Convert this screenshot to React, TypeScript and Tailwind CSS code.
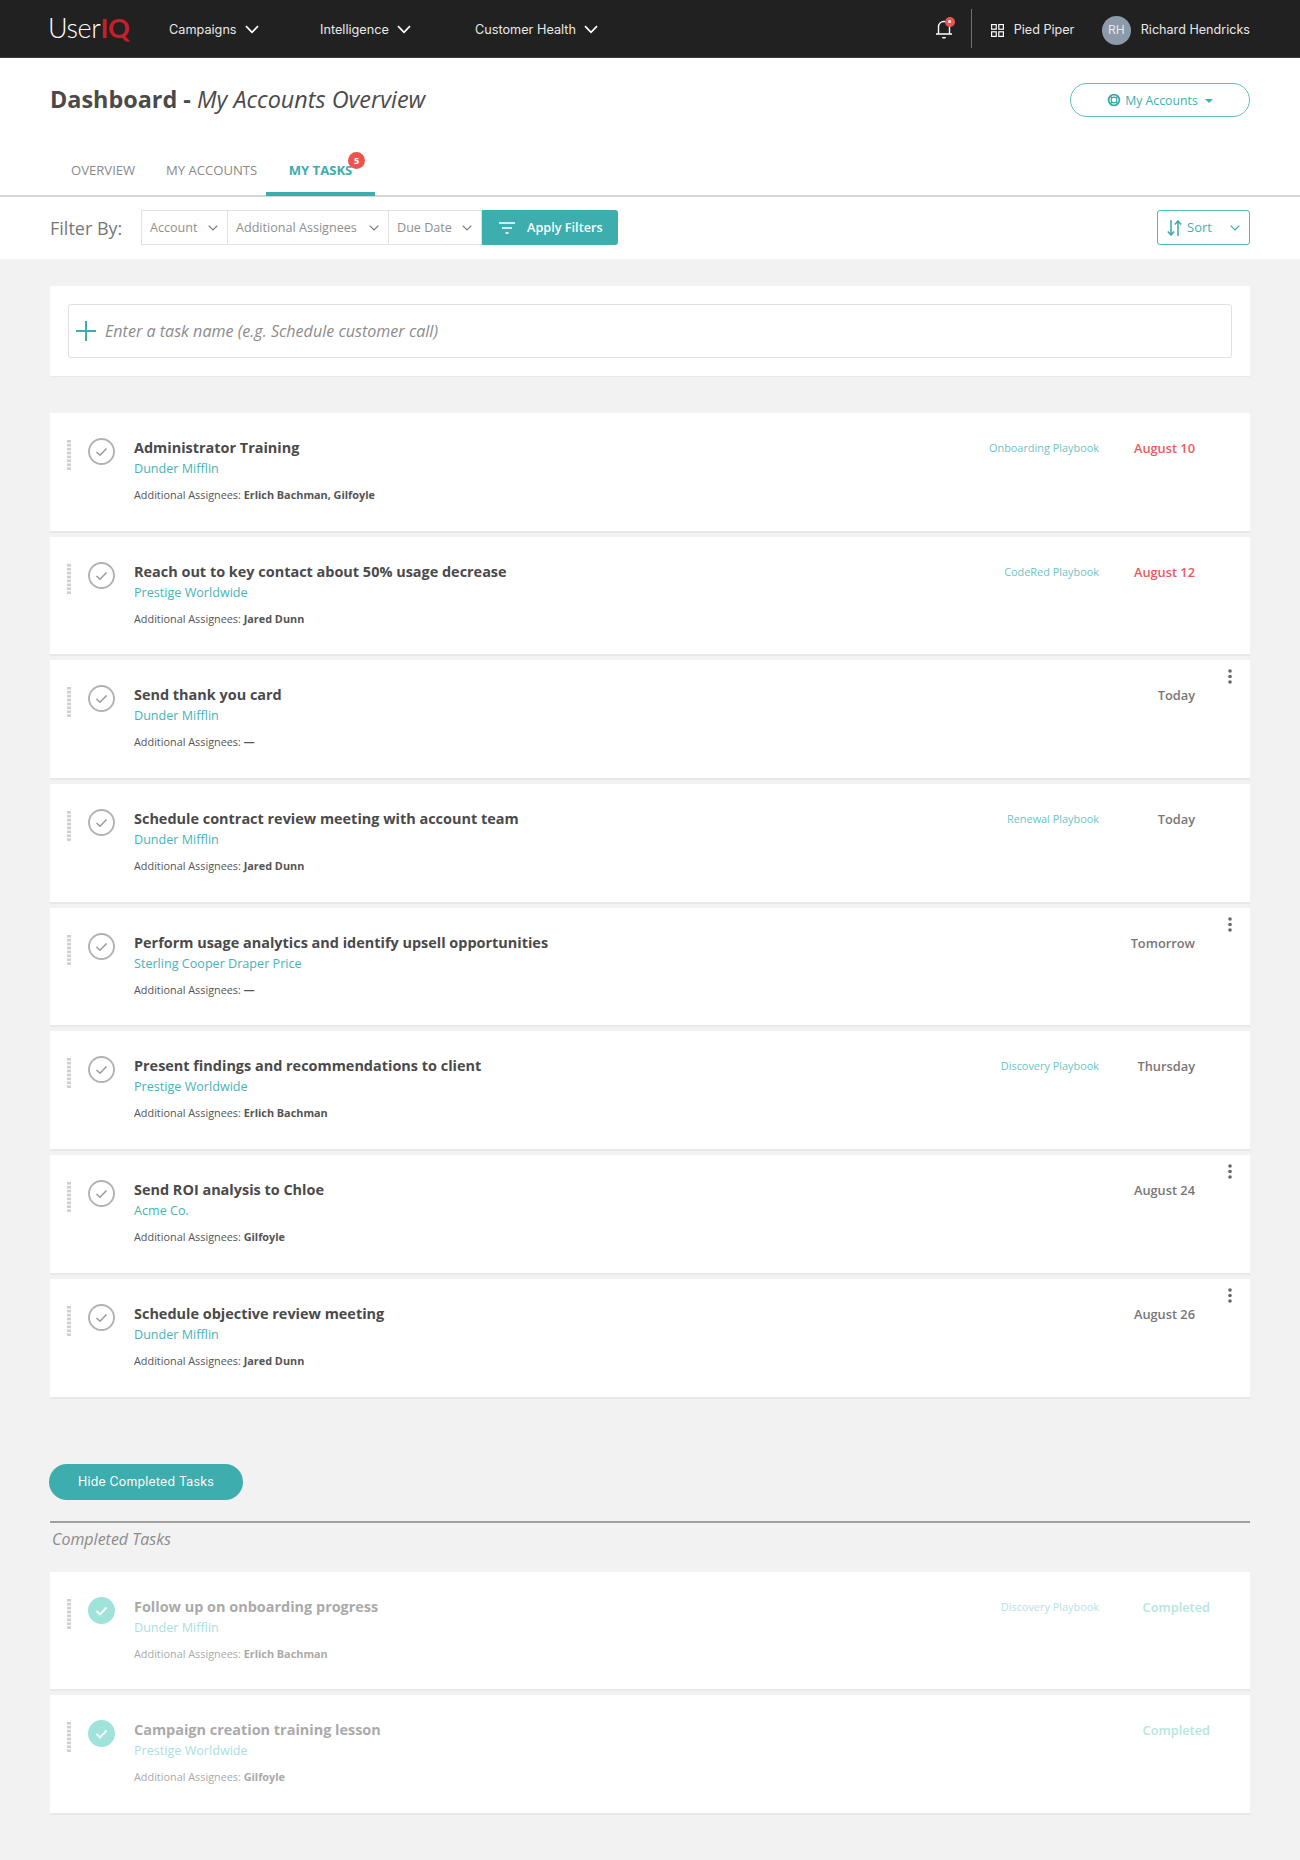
import React from "react";

const OPEN = "font-['Open_Sans','Noto_Sans',sans-serif]";
const INTER = "font-['Inter','Liberation_Sans',sans-serif]";

function Chevron({ className }: { className?: string }) {
  return (
    <svg viewBox="0 0 14 9" fill="none" stroke="currentColor" strokeWidth="1.7" className={className}>
      <path d="M1 1.2 L7 7.4 L13 1.2" />
    </svg>
  );
}

function SmallChevron() {
  return (
    <svg viewBox="0 0 10 6" fill="none" stroke="#777" strokeWidth="1.1" className="w-[10px] h-[6px]">
      <path d="M0.7 0.7 L5 5 L9.3 0.7" />
    </svg>
  );
}

function NavItem({ label, width }: { label: string; width: string }) {
  return (
    <div className={`flex items-center gap-[8px] ${width}`}>
      <span className="whitespace-nowrap text-[12.7px] leading-none text-[#e8e8e8]">{label}</span>
      <Chevron className="w-[14px] h-[9px] text-white" />
    </div>
  );
}

function Header() {
  return (
    <header className={`${INTER} h-[58px] bg-[#212121] border-b border-[#3a3a3a] flex items-center pl-[48px] pr-[50px] pt-[3px]`}>
      <div className="w-[121px] font-['Lato',sans-serif] font-light text-[27px] leading-none tracking-[-0.4px] text-white -mt-[5px]">
        User<span className="text-[#c4202b] font-bold">IQ</span>
      </div>
      <NavItem label="Campaigns" width="w-[151px]" />
      <NavItem label="Intelligence" width="w-[155px]" />
      <NavItem label="Customer Health" width="w-[123px]" />
      <div className="flex-1" />
      <div className="relative w-[18px] h-[22px] mr-[18px] -mt-[3px]">
        <svg viewBox="0 0 18 22" fill="none" stroke="#fff" strokeWidth="1.4" className="w-[18px] h-[22px]">
          <path d="M1 16 H17 M3.5 16 V9 C3.5 5.5 6 3.5 9 3.5 C12 3.5 14.5 5.5 14.5 9 V16" />
          <path d="M7.5 19 C8 20.3 10 20.3 10.5 19" />
        </svg>
        <span className="absolute -top-[1px] right-[-2px] w-[10px] h-[10px] rounded-full bg-[#ef5350] flex items-center justify-center">
          <span className="w-[3px] h-[3px] rounded-full bg-white" />
        </span>
      </div>
      <div className="w-px h-[39px] bg-[#6e6e6e] mr-[19px] -mt-[3px]" />
      <svg viewBox="0 0 13 13" fill="none" stroke="#fff" strokeWidth="1.2" className="w-[13px] h-[13px] mr-[10px]">
        <rect x="0.6" y="0.6" width="4.6" height="4.6" />
        <rect x="7.8" y="0.6" width="4.6" height="4.6" />
        <rect x="0.6" y="7.8" width="4.6" height="4.6" />
        <rect x="7.8" y="7.8" width="4.6" height="4.6" />
      </svg>
      <span className="text-[12.6px] text-[#e8e8e8] w-[88px]">Pied Piper</span>
      <div className="w-[29px] h-[29px] rounded-full bg-[#8d9aa9] flex items-center justify-center text-[12px] text-[#e6e9ec] mr-[10px]">
        RH
      </div>
      <span className="text-[12.6px] text-[#e8e8e8]">Richard Hendricks</span>
    </header>
  );
}

function TitleRow() {
  return (
    <div className={`${OPEN} h-[83px] flex items-start justify-between px-[50px] pt-[25px] bg-white`}>
      <h1 className="text-[23.4px] leading-[33px] text-[#4a4a4a] font-bold">
        Dashboard - <span className="font-normal italic">My Accounts Overview</span>
      </h1>
      <button className="w-[180px] h-[34px] rounded-full border border-[#5fbfbf] flex items-center justify-center gap-[4px] text-[12.3px] text-[#3fb0b0]">
        <svg viewBox="0 0 14 14" fill="none" stroke="#3aa9a9" className="w-[14px] h-[14px]">
          <circle cx="7" cy="7" r="5.4" strokeWidth="1.8" />
          <circle cx="7" cy="7" r="2.9" strokeWidth="1.2" />
          <path d="M3 3 L5 5 M11 3 L9 5 M3 11 L5 9 M11 11 L9 9" strokeWidth="1.6" />
        </svg>
        <span className="pt-[2px]">My Accounts</span>
        <span className="ml-[3px] mt-[1px] w-0 h-0 border-x-[4px] border-x-transparent border-t-[4px] border-t-[#3fb0b0]" />
      </button>
    </div>
  );
}

function Tabs() {
  return (
    <div className={`${OPEN} h-[56px] bg-white border-b-2 border-[#d6d6d6] flex items-end pl-[50px] text-[13.1px]`}>
      <div className="flex w-[100px] h-[55px] pl-[21px] items-center pt-[7px] text-[#8a8a8a]">OVERVIEW</div>
      <div className="flex w-[116px] h-[55px] pl-[16px] items-center pt-[7px] text-[#8a8a8a]">MY ACCOUNTS</div>
      <div className="relative -mb-[1px] w-[109px] h-[55px] border-b-4 border-[#3dadad] flex justify-center items-center pt-[8px] font-bold text-[#3dadad]">
        MY TASKS
        <span className="absolute top-[11px] left-[82px] w-[17px] h-[17px] rounded-full bg-[#ef5350] text-white text-[9px] font-bold flex items-center justify-center">
          5
        </span>
      </div>
    </div>
  );
}

function FilterSelect({ label, width }: { label: string; width: string }) {
  return (
    <div className={`${width} h-full flex items-center justify-between pl-[8px] pr-[9px] border-r border-[#e2e2e2]`}>
      <span className="text-[12.6px] text-[#8f8f8f] pt-[1px]">{label}</span>
      <SmallChevron />
    </div>
  );
}

function FilterBar() {
  return (
    <div className={`${OPEN} h-[62px] bg-white flex items-start justify-between px-[50px] pt-[13px]`}>
      <div className="flex items-center">
        <span className="w-[91px] text-[18px] text-[#777] pt-[1px]">Filter By:</span>
        <div className="h-[35px] flex border-y border-l border-[#e2e2e2]">
          <FilterSelect label="Account" width="w-[86px]" />
          <FilterSelect label="Additional Assignees" width="w-[161px]" />
          <FilterSelect label="Due Date" width="w-[93px]" />
        </div>
        <button className="w-[136px] h-[35px] bg-[#3dadad] rounded-r-[3px] flex items-center pl-[17px] gap-[12px] text-white text-[12.7px] font-semibold">
          <svg viewBox="0 0 16 12" fill="none" stroke="#fff" strokeWidth="1.5" className="w-[16px] h-[12px]">
            <path d="M0 1 H16 M3 6 H13 M6.5 11 H9.5" />
          </svg>
          <span className="pt-[1px]">Apply Filters</span>
        </button>
      </div>
      <button className="w-[93px] h-[35px] rounded-[3px] border border-[#4fb8b8] flex items-center pl-[9px] pr-[9px] text-[13px] text-[#3fb0b0]">
        <svg viewBox="0 0 15 16" fill="none" stroke="#3aa9a9" strokeWidth="1.5" className="w-[15px] h-[16px] mr-[5px]">
          <path d="M4 0 V15 M0.8 11.5 L4 15 L7.2 11.5 M11 16 V1 M7.8 4.5 L11 1 L14.2 4.5" />
        </svg>
        <span>Sort</span>
        <svg viewBox="0 0 10 6" fill="none" stroke="#3aa9a9" strokeWidth="1.2" className="w-[10px] h-[6px] ml-auto">
          <path d="M0.7 0.7 L5 5 L9.3 0.7" />
        </svg>
      </button>
    </div>
  );
}

function DragDots() {
  return (
    <svg viewBox="0 0 4 30" className="w-[4px] h-[30px]" fill="#cfcfcf">
      {[0, 1, 2, 3, 4, 5, 6, 7].map((i) => (
        <rect key={i} x="0" y={i * 3.9} width="4" height="2.6" />
      ))}
    </svg>
  );
}

type TaskProps = {
  title: string;
  account: string;
  assignees: string;
  playbook?: string;
  date: string;
  dateClass?: string;
  menu?: boolean;
  done?: boolean;
};

function Task({ title, account, assignees, playbook, date, dateClass, menu, done }: TaskProps) {
  return (
    <div className={`${OPEN} relative h-[119.7px] bg-white border-b-2 border-[#e6e8ea] flex pl-[17px] pt-[25px]`}>
      <div className="w-[21px] pt-[2px]">
        <DragDots />
      </div>
      <div className="w-[46px]">
        {done ? (
          <svg viewBox="0 0 27 27" className="w-[27px] h-[27px]">
            <circle cx="13.5" cy="13.5" r="13.5" fill="#9fe3da" />
            <path d="M8.5 14 L12 17.3 L18.5 10.5" fill="none" stroke="#fff" strokeWidth="1.9" />
          </svg>
        ) : (
          <svg viewBox="0 0 27 27" className="w-[27px] h-[27px]">
            <circle cx="13.5" cy="13.5" r="12.5" fill="none" stroke="#b2b2b2" strokeWidth="1.9" />
            <path d="M8.5 14 L12 17.2 L18.5 10.5" fill="none" stroke="#9a9a9a" strokeWidth="1.5" />
          </svg>
        )}
      </div>
      <div className="flex-1">
        <div className={`text-[14.45px] leading-[20px] font-bold ${done ? "text-[#aaaaaa]" : "text-[#4a4a4a]"}`}>{title}</div>
        <div className={`mt-[1px] text-[12.6px] leading-[20px] ${done ? "text-[#a9dfdf]" : "text-[#45b5b5]"}`}>{account}</div>
        <div className={`mt-[7px] text-[10.85px] leading-[18px] ${done ? "text-[#aaaaaa]" : "text-[#555]"}`}>
          Additional Assignees: <span className="font-bold">{assignees}</span>
        </div>
      </div>
      {playbook && (
        <div className={`text-[10.9px] leading-[20px] ${done ? "text-[#b5e3e3]" : "text-[#6cc5c5]"}`}>{playbook}</div>
      )}
      <div className={`w-[151px] -mt-[1px] text-right text-[12.8px] leading-[22px] font-semibold ${done ? "pr-[40px]" : "pr-[55px]"} ${dateClass ?? "text-[#777]"}`}>
        {date}
      </div>
      {menu && (
        <svg viewBox="0 0 4 15" fill="#666" className="absolute top-[9px] right-[18px] w-[4px] h-[15px]">
          <circle cx="2" cy="2" r="1.8" />
          <circle cx="2" cy="7.5" r="1.8" />
          <circle cx="2" cy="13" r="1.8" />
        </svg>
      )}
    </div>
  );
}

const RED = "text-[#f0585c]";

export default function App() {
  return (
    <div className="min-h-[1860px] bg-[#f2f2f2]">
      <Header />
      <TitleRow />
      <Tabs />
      <FilterBar />
      <main className={`${OPEN} px-[50px] pt-[27px]`}>
        <section className="h-[91px] bg-white border-b border-[#e6e8ea] pt-[18px] px-[18px]">
          <div className="h-[54px] rounded-[3px] border border-[#dfe1e3] flex items-center pl-[7px] gap-[9px]">
            <svg viewBox="0 0 20 20" fill="none" stroke="#3dadad" strokeWidth="2" className="w-[20px] h-[20px]">
              <path d="M10 0 V20 M0 10 H20" />
            </svg>
            <span className="text-[16.1px] italic text-[#8c8c8c]">Enter a task name (e.g. Schedule customer call)</span>
          </div>
        </section>
        <section className="mt-[36px] flex flex-col gap-[4px]">
          <Task title="Administrator Training" account="Dunder Mifflin" assignees="Erlich Bachman, Gilfoyle" playbook="Onboarding Playbook" date="August 10" dateClass={RED} />
          <Task title="Reach out to key contact about 50% usage decrease" account="Prestige Worldwide" assignees="Jared Dunn" playbook="CodeRed Playbook" date="August 12" dateClass={RED} />
          <Task title="Send thank you card" account="Dunder Mifflin" assignees="—" date="Today" menu />
          <Task title="Schedule contract review meeting with account team" account="Dunder Mifflin" assignees="Jared Dunn" playbook="Renewal Playbook" date="Today" />
          <Task title="Perform usage analytics and identify upsell opportunities" account="Sterling Cooper Draper Price" assignees="—" date="Tomorrow" menu />
          <Task title="Present findings and recommendations to client" account="Prestige Worldwide" assignees="Erlich Bachman" playbook="Discovery Playbook" date="Thursday" />
          <Task title="Send ROI analysis to Chloe" account="Acme Co." assignees="Gilfoyle" date="August 24" menu />
          <Task title="Schedule objective review meeting" account="Dunder Mifflin" assignees="Jared Dunn" date="August 26" menu />
        </section>
        <button className={`${INTER} mt-[65px] -ml-[1px] w-[194px] h-[36px] pt-[2px] rounded-full bg-[#3dadad] text-white text-[12.4px] tracking-[0.2px] block`}>
          Hide Completed Tasks
        </button>
        <div className="mt-[21px] h-[2px] bg-[#a0a0a0]" />
        <div className="mt-[4px] pl-[2px] text-[16px] leading-[24px] italic text-[#8c8c8c]">Completed Tasks</div>
        <section className="mt-[21px] flex flex-col gap-[4px]">
          <Task done title="Follow up on onboarding progress" account="Dunder Mifflin" assignees="Erlich Bachman" playbook="Discovery Playbook" date="Completed" dateClass="text-[#b5e6e0]" />
          <Task done title="Campaign creation training lesson" account="Prestige Worldwide" assignees="Gilfoyle" date="Completed" dateClass="text-[#b5e6e0]" />
        </section>
      </main>
    </div>
  );
}
